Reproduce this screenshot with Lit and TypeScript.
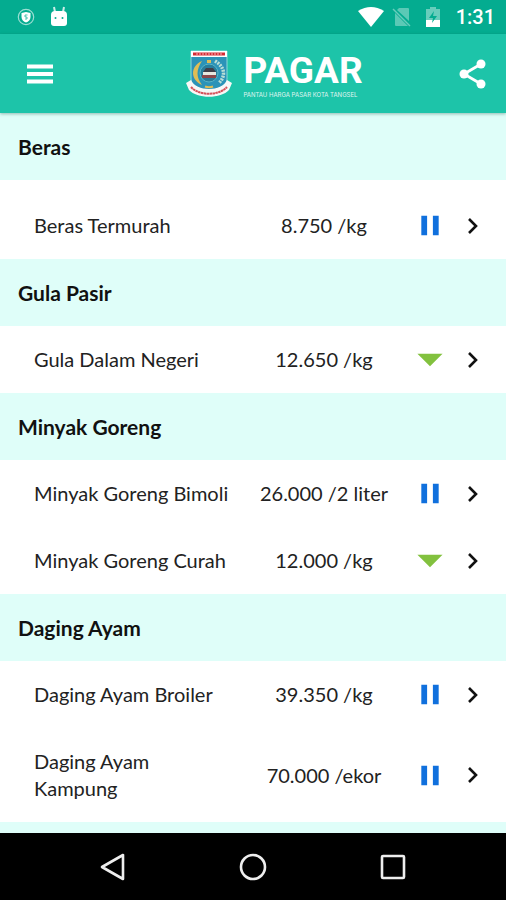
import { LitElement, html, css, svg } from "lit";
import { customElement } from "lit/decorators.js";

type Trend = "steady" | "down";

interface Item {
  name: string;
  price: string;
  trend: Trend;
}

interface Group {
  title: string;
  items: Item[];
}

const groups: Group[] = [
  { title: "Beras", items: [{ name: "Beras Termurah", price: "8.750 /kg", trend: "steady" }] },
  { title: "Gula Pasir", items: [{ name: "Gula Dalam Negeri", price: "12.650 /kg", trend: "down" }] },
  {
    title: "Minyak Goreng",
    items: [
      { name: "Minyak Goreng Bimoli", price: "26.000 /2 liter", trend: "steady" },
      { name: "Minyak Goreng Curah", price: "12.000 /kg", trend: "down" },
    ],
  },
  {
    title: "Daging Ayam",
    items: [
      { name: "Daging Ayam Broiler", price: "39.350 /kg", trend: "steady" },
      { name: "Daging Ayam Kampung", price: "70.000 /ekor", trend: "steady" },
    ],
  },
];

const trendShape = {
  steady: svg`<path fill="#1070dd" d="M5 4h6v20H5zM17 4h6v20h-6z"/>`,
  down: svg`<path fill="#82c13e" d="M1 8h26L14 21z"/>`,
};

@customElement("price-row")
export class PriceRow extends LitElement {
  static properties = { item: { attribute: false } };
  declare item: Item;

  static styles = css`
    :host {
      display: block;
      background: #fff;
    }
    .row {
      display: grid;
      grid-template-columns: minmax(0, 1fr) 156px 56px 30px;
      align-items: center;
      padding: 20px 18px 20px 34px;
      color: #222;
      text-decoration: none;
      font-size: 20px;
      line-height: 27px;
    }
    .name {
      padding-right: 12px;
    }
    .price {
      text-align: center;
      white-space: nowrap;
    }
    .icon {
      display: block;
      justify-self: center;
    }
  `;

  render() {
    const { name, price, trend } = this.item;
    return html`
      <a class="row" href="#">
        <span class="name">${name}</span>
        <span class="price">${price}</span>
        <svg class="icon" width="28" height="27" viewBox="0 0 28 28" aria-hidden="true">${trendShape[trend]}</svg>
        <svg class="icon" width="16" height="20" viewBox="0 0 16 20" aria-hidden="true">
          <path d="M4 3l7 7-7 7" fill="none" stroke="#111" stroke-width="2.6" />
        </svg>
      </a>
    `;
  }
}

@customElement("app-root")
export class AppRoot extends LitElement {
  static styles = css`
    :host {
      display: flex;
      flex-direction: column;
      height: 100vh;
      overflow: hidden;
      font-family: Lato, "Open Sans", sans-serif;
    }
    .status {
      display: flex;
      flex: none;
      align-items: center;
      justify-content: space-between;
      height: 34px;
      padding: 0 11px 0 17px;
      background: #04ac90;
      color: #fff;
    }
    .status-group {
      display: flex;
      align-items: center;
      gap: 15px;
    }
    .clock {
      font: 500 20px/34px Roboto, sans-serif;
    }
    .end {
      gap: 8px;
    }
    .bar {
      z-index: 1;
      display: flex;
      flex: none;
      align-items: center;
      justify-content: space-between;
      height: 79px;
      padding: 0 16px 0 22px;
      background: #1dc4a9;
      box-shadow: 0 1px 3px rgba(0, 60, 50, 0.35);
    }
    .action,
    .key {
      display: grid;
      place-items: center;
      padding: 0;
      border: 0;
      background: none;
      cursor: pointer;
    }
    .action {
      width: 36px;
      height: 48px;
    }
    .brand {
      display: flex;
      align-items: center;
      gap: 10px;
      padding-left: 36px;
      color: #fff;
      font-family: Roboto, sans-serif;
    }
    .words {
      display: flex;
      flex-direction: column;
      padding-top: 2px;
    }
    .wordmark {
      margin: 0;
      font-size: 37px;
      font-weight: 700;
      line-height: 40px;
    }
    .tagline {
      font-family: Inter, sans-serif;
      font-size: 6px;
      line-height: 8px;
      white-space: nowrap;
      opacity: 0.85;
    }
    .list {
      flex: 1;
      min-height: 0;
      overflow: hidden;
      background: #dffef9;
    }
    .title {
      margin: 0;
      padding: 20px 18px;
      color: #111;
      font-size: 21px;
      font-weight: 700;
      line-height: 27px;
    }
    .group:first-child .rows {
      padding-top: 12px;
    }
    .rows {
      margin: 0;
      padding: 0;
      background: #fff;
      list-style: none;
    }
    .keys {
      display: flex;
      flex: none;
      align-items: center;
      justify-content: center;
      gap: 36px;
      height: 67px;
      background: #000;
    }
    .key {
      width: 104px;
      height: 48px;
    }
  `;

  private crest() {
    return svg`
      <svg width="48" height="50" viewBox="0 0 48 50" role="img" aria-label="Tangerang Selatan">
        <path d="M6 2h36v28c0 9-9 13-18 16C15 43 6 39 6 30z" fill="#2b93b8" stroke="#8fd6dc" stroke-width="1"/>
        <path d="M6 2h36v6H6z" fill="#fff"/>
        <path d="M8 5h32" stroke="#d52a35" stroke-width="3"/>
        <path d="M11 5h26" stroke="#f3b5b8" stroke-width="1" stroke-dasharray="2 1"/>
        <path d="M17 12c-12 5-12 19 0 24-6-8-6-15 0-24z" fill="#e0bd55"/>
        <path d="M30 12c10 6 11 15 4 22" fill="none" stroke="#b9ded6" stroke-width="3.500" stroke-dasharray="2 1"/>
        <circle cx="24" cy="24" r="9" fill="#287d9b" stroke="#58b5c7"/>
        <path d="M22 11h4v3h-4z" fill="#e0bd55"/>
        <path d="M18 23l3-4h7l3 4z" fill="#413f49"/>
        <path d="M18 23h13v3H18z" fill="#e8e7df"/>
        <path d="M17 26h14v3H17z" fill="#8c474b"/>
        <path d="M20 37.500q4 1.500 8 0" fill="none" stroke="#e0bd55" stroke-width="2"/>
        <path d="M1 34l5-3c5 12 31 12 36 0l5 3-3 7c-8 9-32 9-40 0z" fill="#f7f8f7"/>
        <path d="M6 38c8 9 28 9 36 0" fill="none" stroke="#d5535b" stroke-width="2" stroke-dasharray="2.500 .4"/>
      </svg>`;
  }

  render() {
    return html`
      <div class="status">
        <div class="status-group">
          <svg width="18" height="18" viewBox="0 0 18 18" aria-hidden="true">
            <circle cx="9" cy="9" r="7.7" fill="none" stroke="#fff" stroke-opacity=".6" stroke-width="1.2"/>
            <path d="M9 4l4.500 1v4c0 3-2 4.500-4.500 5.500C6.500 13.500 4.500 12 4.500 9V5z" fill="#fff"/>
            <path d="M10.500 7H8v2h2v2H8" fill="none" stroke="#04ac90" stroke-opacity=".7"/>
          </svg>
          <svg width="20" height="22" viewBox="0 0 20 22" aria-hidden="true">
            <path d="M5 6L4 1M13 6l1-5" stroke="#fff" stroke-opacity=".8" stroke-width="2"/>
            <path d="M1 9q0-4 4-4h8q4 0 4 4v8q0 3-3 3H4q-3 0-3-3z" fill="#fff"/>
            <circle cx="5.500" cy="12" r="1" fill="#04ac90"/>
            <circle cx="12.500" cy="12" r="1" fill="#04ac90"/>
          </svg>
        </div>
        <div class="status-group end">
          <svg width="26" height="20" viewBox="0 0 26 20" aria-hidden="true">
            <path d="M0 4Q13-4 26 4L13 20z" fill="#fff"/>
          </svg>
          <svg width="20" height="20" viewBox="0 0 20 20" aria-hidden="true">
            <path d="M7 1h9q1 0 1 1v12L5 3zM3 6l13 13H4q-1 0-1-1z" fill="#fff" fill-opacity=".35"/>
            <path d="M1 2l17 17" stroke="#fff" stroke-opacity=".4" stroke-width="1.500"/>
          </svg>
          <svg width="28" height="20" viewBox="0 0 28 20" aria-hidden="true">
            <path d="M10 0h6v2h4v11H6V2h4z" fill="#fff" fill-opacity=".4"/>
            <path d="M6 13h14v7H6z" fill="#fff"/>
            <path d="M14 4l-5 7h4l-1 5 5-7h-4z" fill="#04ac90"/>
          </svg>
          <span class="clock">1:31</span>
        </div>
      </div>

      <header class="bar">
        <button class="action" aria-label="Menu">
          <svg width="28" height="20" viewBox="0 0 28 20">
            <path d="M1 2.500h26M1 10h26M1 17.500h26" stroke="#fff" stroke-width="4"/>
          </svg>
        </button>
        <div class="brand">
          ${this.crest()}
          <div class="words">
            <h1 class="wordmark">PAGAR</h1>
            <span class="tagline">PANTAU HARGA PASAR KOTA TANGSEL</span>
          </div>
        </div>
        <button class="action" aria-label="Share">
          <svg width="28" height="30" viewBox="0 0 28 30">
            <path d="M23 5L6 15l17 10" fill="none" stroke="#fff" stroke-width="2.800"/>
            <circle cx="23" cy="5" r="4.500" fill="#fff"/>
            <circle cx="6" cy="15" r="4.500" fill="#fff"/>
            <circle cx="23" cy="25" r="4.500" fill="#fff"/>
          </svg>
        </button>
      </header>

      <main class="list">
        ${groups.map(
          (group) => html`
            <section class="group">
              <h2 class="title">${group.title}</h2>
              <ul class="rows">
                ${group.items.map((item) => html`<li><price-row .item=${item}></price-row></li>`)}
              </ul>
            </section>
          `,
        )}
      </main>

      <nav class="keys">
        <button class="key" aria-label="Back">
          <svg width="28" height="28" viewBox="0 0 28 28">
            <path d="M24 2v24L3 14z" fill="none" stroke="#eee" stroke-width="2.600" stroke-linejoin="round"/>
          </svg>
        </button>
        <button class="key" aria-label="Home">
          <svg width="28" height="28" viewBox="0 0 28 28">
            <circle cx="14" cy="14" r="12" fill="none" stroke="#eee" stroke-width="2.600"/>
          </svg>
        </button>
        <button class="key" aria-label="Recent apps">
          <svg width="28" height="28" viewBox="0 0 28 28">
            <rect x="3" y="3" width="22" height="22" rx="1" fill="none" stroke="#eee" stroke-width="2.600"/>
          </svg>
        </button>
      </nav>
    `;
  }
}
